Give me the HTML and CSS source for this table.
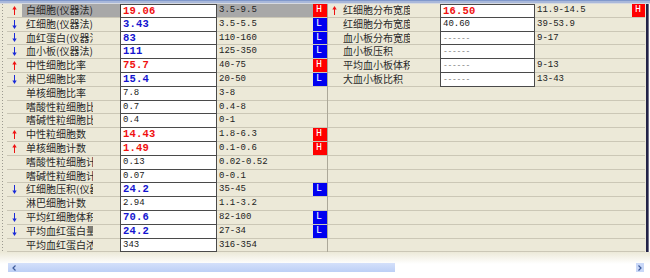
FILE: index.html
```html
<!DOCTYPE html>
<html lang="zh">
<head>
<meta charset="utf-8">
<title>血常规结果</title>
<link rel="stylesheet" href="styles.css">
</head>
<body>
<div class="window">
  <div class="topbar"></div>
  <div class="panel">
    <div class="gutter"></div>
    <div class="tbl left">
      <div class="row sel"><span class="arr"><svg class="up" width="5" height="9" viewBox="0 0 5 9"><path d="M2.5 1.5V9" stroke="currentColor" stroke-width="1"/><path d="M0.3 3.6L2.5 0L4.7 3.6Z" fill="currentColor"/></svg></span><span class="name"><span class="nt">白细胞(仪器法)</span></span><span class="val hi">19.06</span><span class="rng">3.5-9.5</span><span class="flag h">H</span></div>
      <div class="row"><span class="arr"><svg class="dn" width="5" height="9" viewBox="0 0 5 9"><path d="M2.5 0V7.5" stroke="currentColor" stroke-width="1"/><path d="M0.3 5.4L2.5 9L4.7 5.4Z" fill="currentColor"/></svg></span><span class="name"><span class="nt">红细胞(仪器法)</span></span><span class="val lo">3.43</span><span class="rng">3.5-5.5</span><span class="flag l">L</span></div>
      <div class="row"><span class="arr"><svg class="dn" width="5" height="9" viewBox="0 0 5 9"><path d="M2.5 0V7.5" stroke="currentColor" stroke-width="1"/><path d="M0.3 5.4L2.5 9L4.7 5.4Z" fill="currentColor"/></svg></span><span class="name"><span class="nt">血红蛋白(仪器法)</span></span><span class="val lo">83</span><span class="rng">110-160</span><span class="flag l">L</span></div>
      <div class="row"><span class="arr"><svg class="dn" width="5" height="9" viewBox="0 0 5 9"><path d="M2.5 0V7.5" stroke="currentColor" stroke-width="1"/><path d="M0.3 5.4L2.5 9L4.7 5.4Z" fill="currentColor"/></svg></span><span class="name"><span class="nt">血小板(仪器法)</span></span><span class="val lo">111</span><span class="rng">125-350</span><span class="flag l">L</span></div>
      <div class="row"><span class="arr"><svg class="up" width="5" height="9" viewBox="0 0 5 9"><path d="M2.5 1.5V9" stroke="currentColor" stroke-width="1"/><path d="M0.3 3.6L2.5 0L4.7 3.6Z" fill="currentColor"/></svg></span><span class="name"><span class="nt">中性细胞比率</span></span><span class="val hi">75.7</span><span class="rng">40-75</span><span class="flag h">H</span></div>
      <div class="row"><span class="arr"><svg class="dn" width="5" height="9" viewBox="0 0 5 9"><path d="M2.5 0V7.5" stroke="currentColor" stroke-width="1"/><path d="M0.3 5.4L2.5 9L4.7 5.4Z" fill="currentColor"/></svg></span><span class="name"><span class="nt">淋巴细胞比率</span></span><span class="val lo">15.4</span><span class="rng">20-50</span><span class="flag l">L</span></div>
      <div class="row"><span class="arr"></span><span class="name"><span class="nt">单核细胞比率</span></span><span class="val">7.8</span><span class="rng">3-8</span><span class="flag"></span></div>
      <div class="row"><span class="arr"></span><span class="name"><span class="nt">嗜酸性粒细胞比率</span></span><span class="val">0.7</span><span class="rng">0.4-8</span><span class="flag"></span></div>
      <div class="row"><span class="arr"></span><span class="name"><span class="nt">嗜碱性粒细胞比率</span></span><span class="val">0.4</span><span class="rng">0-1</span><span class="flag"></span></div>
      <div class="row"><span class="arr"><svg class="up" width="5" height="9" viewBox="0 0 5 9"><path d="M2.5 1.5V9" stroke="currentColor" stroke-width="1"/><path d="M0.3 3.6L2.5 0L4.7 3.6Z" fill="currentColor"/></svg></span><span class="name"><span class="nt">中性粒细胞数</span></span><span class="val hi">14.43</span><span class="rng">1.8-6.3</span><span class="flag h">H</span></div>
      <div class="row"><span class="arr"><svg class="up" width="5" height="9" viewBox="0 0 5 9"><path d="M2.5 1.5V9" stroke="currentColor" stroke-width="1"/><path d="M0.3 3.6L2.5 0L4.7 3.6Z" fill="currentColor"/></svg></span><span class="name"><span class="nt">单核细胞计数</span></span><span class="val hi">1.49</span><span class="rng">0.1-0.6</span><span class="flag h">H</span></div>
      <div class="row"><span class="arr"></span><span class="name"><span class="nt">嗜酸性粒细胞计数</span></span><span class="val">0.13</span><span class="rng">0.02-0.52</span><span class="flag"></span></div>
      <div class="row"><span class="arr"></span><span class="name"><span class="nt">嗜碱性粒细胞计数</span></span><span class="val">0.07</span><span class="rng">0-0.1</span><span class="flag"></span></div>
      <div class="row"><span class="arr"><svg class="dn" width="5" height="9" viewBox="0 0 5 9"><path d="M2.5 0V7.5" stroke="currentColor" stroke-width="1"/><path d="M0.3 5.4L2.5 9L4.7 5.4Z" fill="currentColor"/></svg></span><span class="name"><span class="nt">红细胞压积(仪器法)</span></span><span class="val lo">24.2</span><span class="rng">35-45</span><span class="flag l">L</span></div>
      <div class="row"><span class="arr"></span><span class="name"><span class="nt">淋巴细胞计数</span></span><span class="val">2.94</span><span class="rng">1.1-3.2</span><span class="flag"></span></div>
      <div class="row"><span class="arr"><svg class="dn" width="5" height="9" viewBox="0 0 5 9"><path d="M2.5 0V7.5" stroke="currentColor" stroke-width="1"/><path d="M0.3 5.4L2.5 9L4.7 5.4Z" fill="currentColor"/></svg></span><span class="name"><span class="nt">平均红细胞体积</span></span><span class="val lo">70.6</span><span class="rng">82-100</span><span class="flag l">L</span></div>
      <div class="row"><span class="arr"><svg class="dn" width="5" height="9" viewBox="0 0 5 9"><path d="M2.5 0V7.5" stroke="currentColor" stroke-width="1"/><path d="M0.3 5.4L2.5 9L4.7 5.4Z" fill="currentColor"/></svg></span><span class="name"><span class="nt">平均血红蛋白量</span></span><span class="val lo">24.2</span><span class="rng">27-34</span><span class="flag l">L</span></div>
      <div class="row"><span class="arr"></span><span class="name"><span class="nt">平均血红蛋白浓度</span></span><span class="val">343</span><span class="rng">316-354</span><span class="flag"></span></div>
    </div>
    <div class="tbl right">
      <div class="row"><span class="arr"><svg class="up" width="5" height="9" viewBox="0 0 5 9"><path d="M2.5 1.5V9" stroke="currentColor" stroke-width="1"/><path d="M0.3 3.6L2.5 0L4.7 3.6Z" fill="currentColor"/></svg></span><span class="name"><span class="nt">红细胞分布宽度CV</span></span><span class="val hi">16.50</span><span class="rng">11.9-14.5</span><span class="flag h">H</span></div>
      <div class="row"><span class="arr"></span><span class="name"><span class="nt">红细胞分布宽度SD</span></span><span class="val">40.60</span><span class="rng">39-53.9</span><span class="flag"></span></div>
      <div class="row"><span class="arr"></span><span class="name"><span class="nt">血小板分布宽度</span></span><span class="val dash">------</span><span class="rng">9-17</span><span class="flag"></span></div>
      <div class="row"><span class="arr"></span><span class="name"><span class="nt">血小板压积</span></span><span class="val dash">------</span><span class="rng"></span><span class="flag"></span></div>
      <div class="row"><span class="arr"></span><span class="name"><span class="nt">平均血小板体积</span></span><span class="val dash">------</span><span class="rng">9-13</span><span class="flag"></span></div>
      <div class="row"><span class="arr"></span><span class="name"><span class="nt">大血小板比积</span></span><span class="val dash">------</span><span class="rng">13-43</span><span class="flag"></span></div>
      <div class="row blank"></div>
      <div class="row blank"></div>
      <div class="row blank"></div>
      <div class="row blank"></div>
      <div class="row blank"></div>
      <div class="row blank"></div>
      <div class="row blank"></div>
      <div class="row blank"></div>
      <div class="row blank"></div>
      <div class="row blank"></div>
      <div class="row blank"></div>
      <div class="row blank"></div>
    </div>
    <div class="edge"></div>
  </div>
  <div class="bottom">
    <div class="hscroll"><svg width="4" height="6" viewBox="0 0 4 6"><path d="M3.5 0.5L1 3L3.5 5.5" fill="none" stroke="#3d5a9a" stroke-width="1.2"/></svg></div>
    <div class="sbtn"><svg width="4" height="6" viewBox="0 0 4 6"><path d="M0.5 0.5L3 3L0.5 5.5" fill="none" stroke="#3d5a9a" stroke-width="1.2"/></svg></div>
  </div>
</div>
</body>
</html>
```
FILE: styles.css
```css
html, body {
  margin: 0;
  padding: 0;
  background: #ffffff;
}
.window {
  width: 650px;
  height: 278px;
  display: flex;
  flex-direction: column;
  overflow: hidden;
  font-family: "Noto Sans CJK SC", "Noto Sans", sans-serif;
}
.topbar {
  height: 4px;
  flex: none;
  background: linear-gradient(#8098cc 0 1px, #a9b8da 1px 3px, #d6d9e0 3px 4px);
}
.panel {
  display: flex;
  flex: none;
  height: 248.4px;
  background: #ece9d8;
}
.gutter {
  width: 7px;
  flex: none;
  background-image: repeating-linear-gradient(to bottom, #9c9a90 0 1px, transparent 1px 3px);
  background-size: 1px 100%;
  background-position: 2px 0;
  background-repeat: no-repeat;
}
.tbl {
  display: flex;
  flex-direction: column;
  flex: none;
}
.left { width: 320px; }
.right {
  width: 317px;
  border-left: 1px solid #aca899;
}
.row {
  display: grid;
  height: 13.8px;
  box-sizing: border-box;
  border-bottom: 1px solid #cbc7b6;
  font-size: 10px;
  line-height: 12.8px;
}
.left .row { grid-template-columns: 15px 98px 97px 96px 14px; }
.right .row { grid-template-columns: 12px 100px 95px 97px 13px; }
.arr {
  display: flex;
  align-items: center;
  justify-content: center;
}
.arr .up { color: #ee1111; }
.arr .dn { color: #1a2ad8; }
.name {
  padding-left: 4px;
  color: #2a2a2a;
  overflow: hidden;
}
.right .name { padding-left: 3px; }
.nt {
  display: block;
  width: 67px;
  overflow: hidden;
  white-space: nowrap;
}
.val {
  background: #ffffff;
  border-left: 1px solid #4a4a4a;
  border-right: 1px solid #4a4a4a;
  border-bottom: 1px solid #4a4a4a;
  margin-bottom: -1px;
  padding-left: 2px;
  font-family: "Liberation Mono", monospace;
  font-size: 9px;
  color: #1a1a1a;
  white-space: nowrap;
  overflow: hidden;
}
.row:first-child .val { border-top: 1px solid #4a4a4a; }
.val.hi, .val.lo {
  font-weight: bold;
  font-size: 10.5px;
  letter-spacing: 0.2px;
}
.val.hi { color: #f01010; }
.val.lo { color: #1414d0; }
.val.dash { color: #6a6a6a; font-size: 8px; letter-spacing: -0.3px; }
.rng {
  padding-left: 2px;
  font-family: "Liberation Mono", monospace;
  font-size: 9px;
  color: #222222;
  white-space: nowrap;
}
.sel .name, .sel .rng { background: #a8a8a8; }
.sel .val { border-left-color: #333; }
.flag {
  padding-left: 3px;
  font-family: "Liberation Mono", monospace;
  font-size: 10px;
  color: #ffffff;
}
.flag.h { background: #ff0000; }
.flag.l { background: #0000f0; }
.edge {
  flex: none;
  width: 5px;
  background: linear-gradient(to right, #ece9d8 0 1px, #232347 1px 3px, #6f6f86 3px 4px, #ffffff 4px);
}
.bottom {
  flex: 1;
  display: flex;
  align-items: flex-start;
  padding-top: 11px;
  padding-left: 8px;
  padding-right: 6px;
  background: linear-gradient(#ece9d8, #ffffff 12px);
}
.hscroll {
  width: 387px;
  height: 9px;
  display: flex;
  align-items: center;
  padding-left: 4px;
  box-sizing: border-box;
  background: linear-gradient(#d4e0fa, #bccff6);
}
.sbtn {
  margin-left: auto;
  width: 8px;
  height: 9px;
  display: flex;
  align-items: center;
  justify-content: center;
  background: #c9d8f8;
}
```
